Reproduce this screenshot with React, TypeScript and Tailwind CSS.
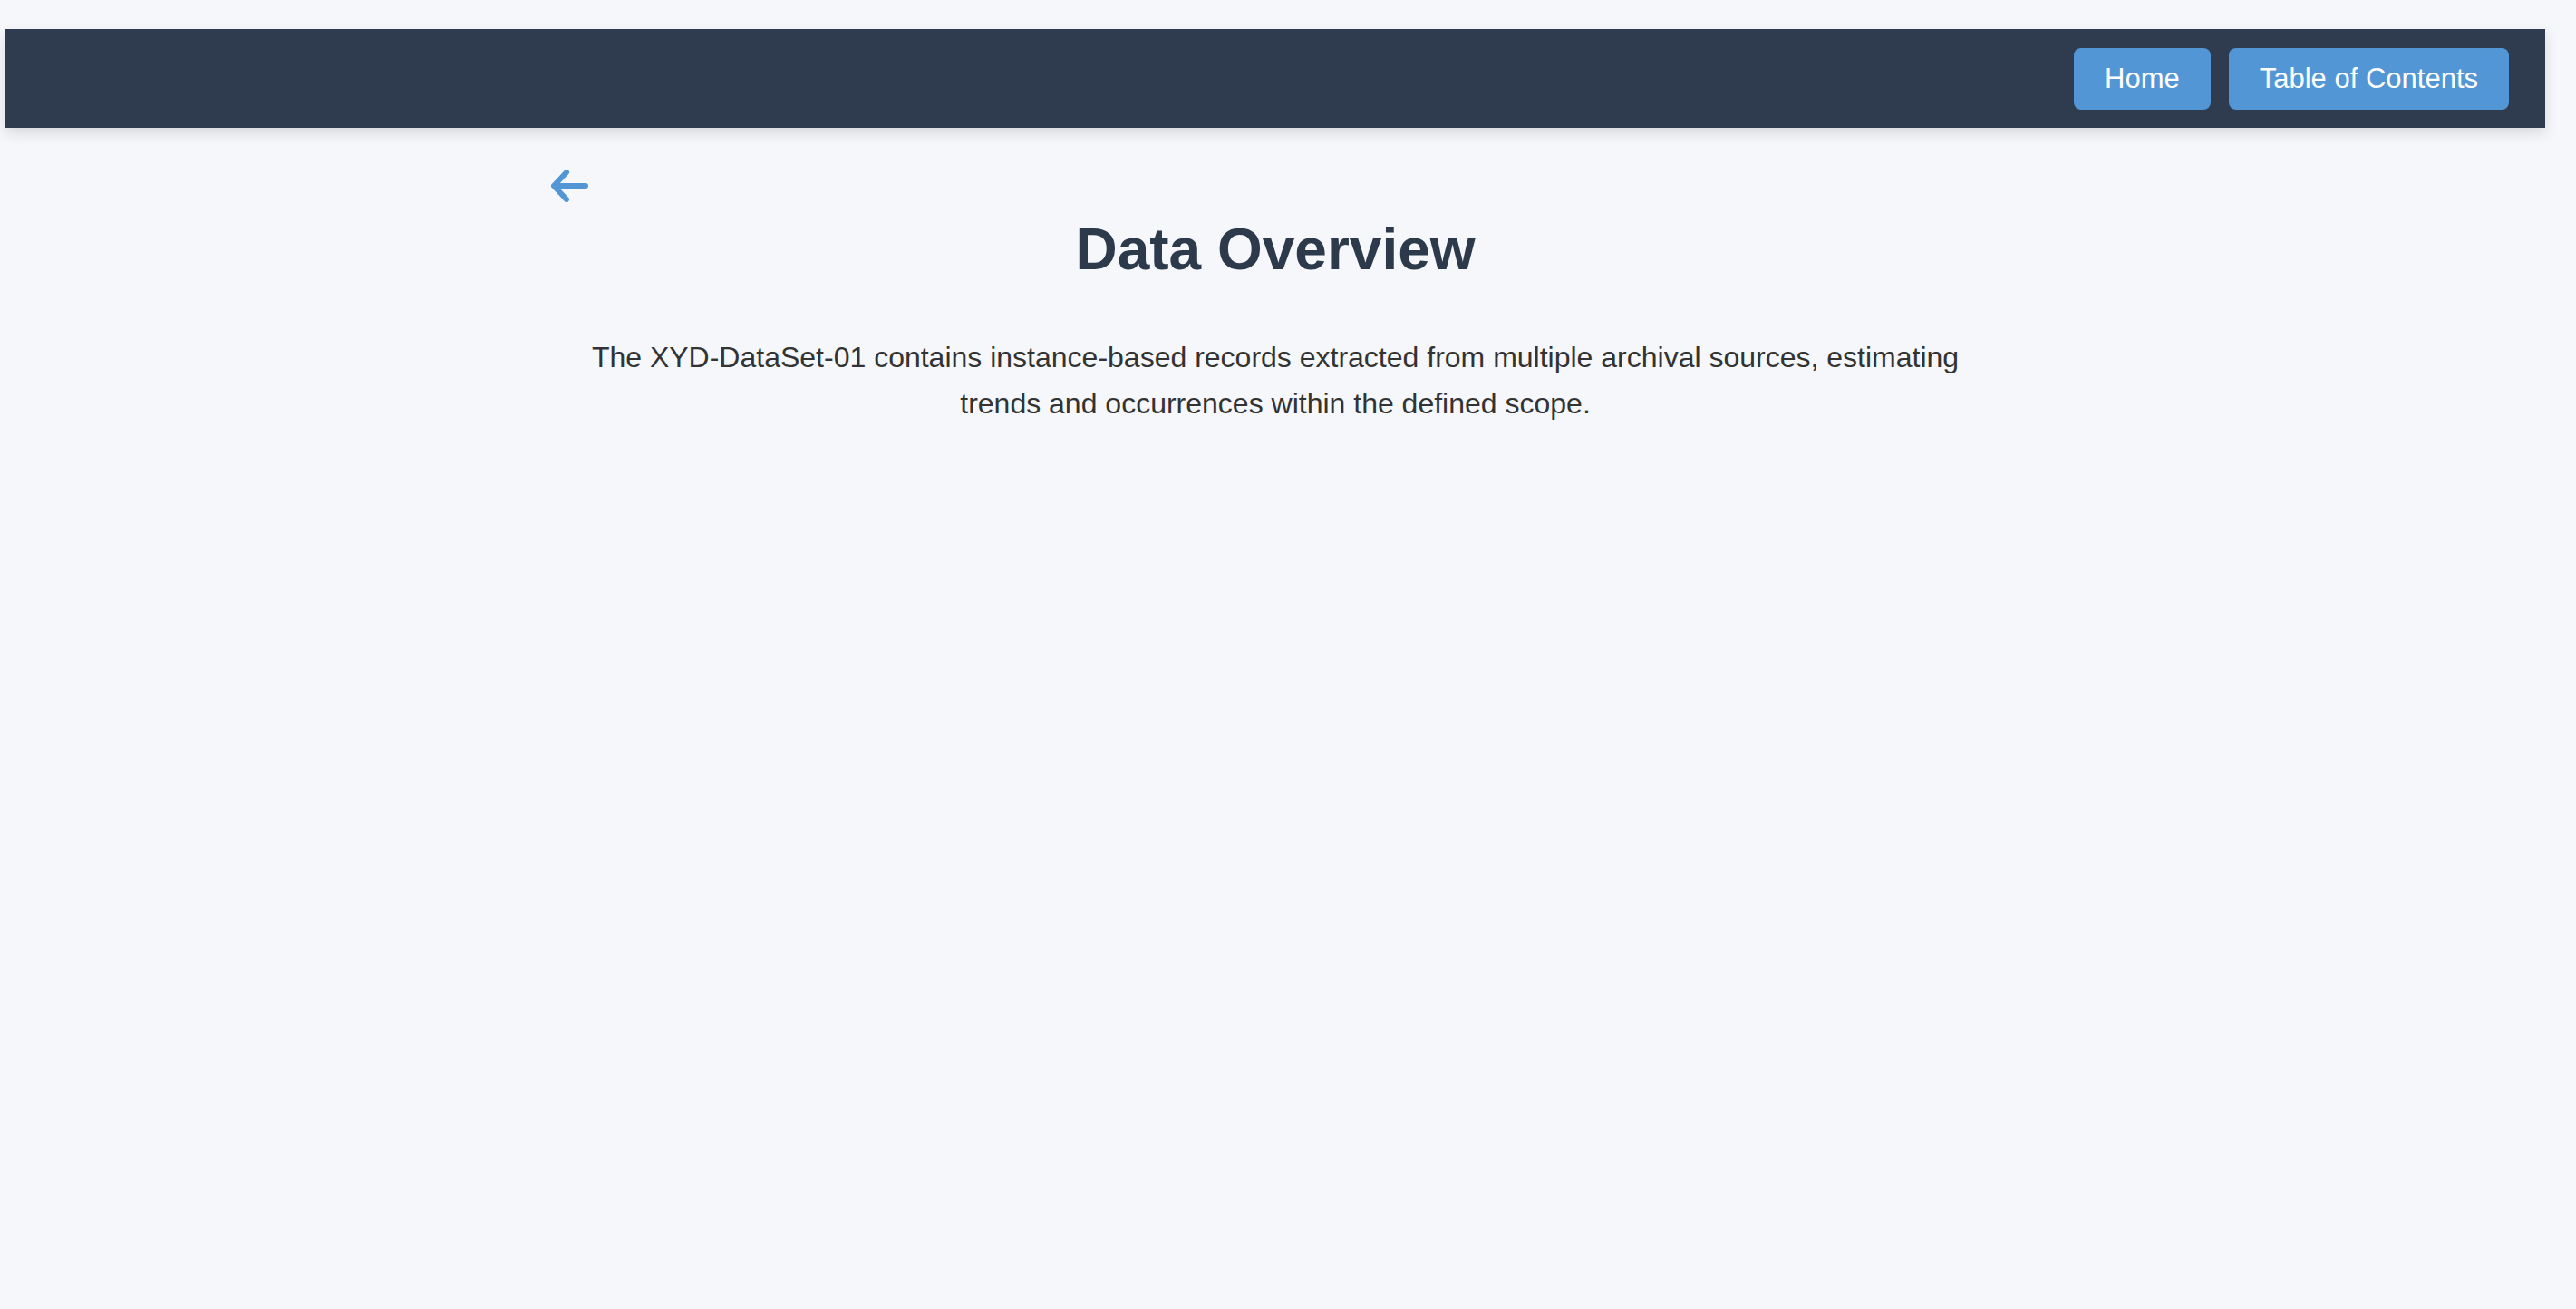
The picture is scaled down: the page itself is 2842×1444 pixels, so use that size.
export default function App() {
  return (
    <div className="min-h-screen bg-[#f5f7fb] font-['Liberation_Sans',Arial,sans-serif] pt-[32px]">
      <header className="ml-[6px] mr-[34px] h-[109px] bg-[#2f3c4f] shadow-[0_6px_14px_rgba(0,0,0,0.12)] flex items-center justify-end gap-[20px] px-[40px]">
        <button className="h-[68px] px-[34px] rounded-[8px] bg-[#5296d6] text-white text-[31px] leading-none">
          Home
        </button>
        <button className="h-[68px] px-[34px] rounded-[8px] bg-[#5296d6] text-white text-[31px] leading-none">
          Table of Contents
        </button>
      </header>
      <main className="ml-[6px] mr-[34px]">
        <div className="max-w-[1600px] mx-auto pt-[46px]">
          <button className="block h-[36px] w-[42px]" aria-label="Back">
            <svg width="42" height="36" viewBox="0 0 42 36" fill="none">
              <path
                d="M4 18H39M18 3L4 18L18 33"
                stroke="#5296d6"
                strokeWidth="6"
                strokeLinecap="round"
                strokeLinejoin="round"
              />
            </svg>
          </button>
          <h1 className="mt-[4px] text-center text-[64px] font-bold text-[#2d3a4b]">
            Data Overview
          </h1>
          <p className="max-w-[1560px] mx-auto mt-[46px] text-center text-[32px] leading-[51px] text-[#333333]">
            The XYD-DataSet-01 contains instance-based records extracted from multiple archival sources, estimating
            trends and occurrences within the defined scope.
          </p>
        </div>
      </main>
    </div>
  );
}
